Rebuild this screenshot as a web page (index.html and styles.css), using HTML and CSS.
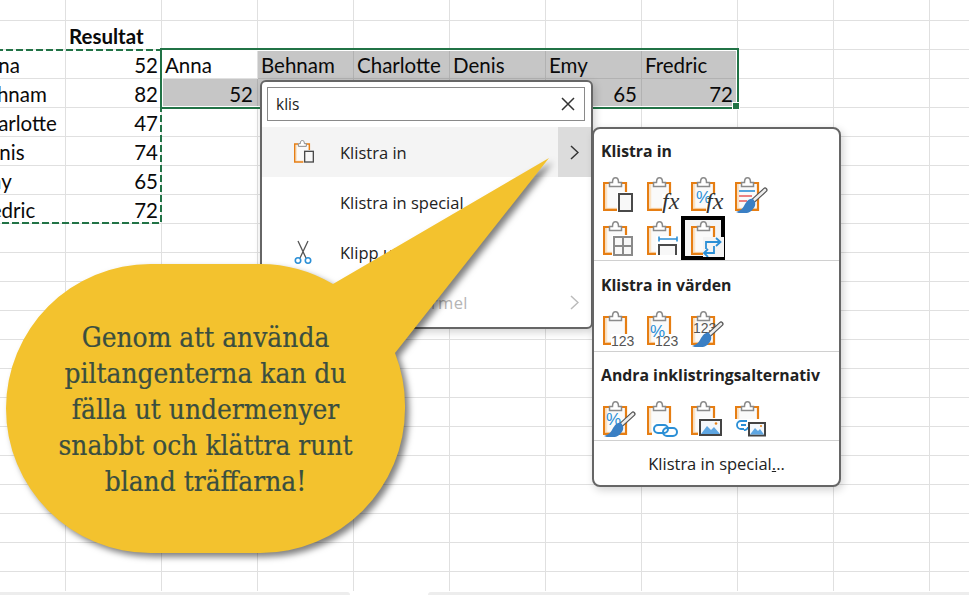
FILE: index.html
```html
<!DOCTYPE html>
<html lang="sv">
<head>
  <meta charset="UTF-8">
  <meta name="viewport" content="width=device-width, initial-scale=1.0">
  <title>Klistra in</title>
  <link rel="stylesheet" href="styles.css">
</head>

<body>
  <!-- shared icon parts -->
  <svg class="defs" width="0" height="0">
    <defs>
      <symbol id="board" viewBox="0 0 33 36">
        <path d="M2 7H23V33H2Z" fill="#fafafa"/>
        <path d="M3 31.500H23" stroke="#fbe3c4" stroke-width="1.500"/>
        <path d="M3.500 7V31" stroke="#fbe3c4" stroke-width="1.500"/>
        <path d="M6 6H1.100V32.900H23V6H18" fill="none" stroke="#e67e13" stroke-width="2.200"/>
        <path d="M6.500 9.500V5.500H9.500C9.500 2 10.500 .8 12.500 .8S15.500 2 15.500 5.500H18.500V9.500Z" fill="#fff" stroke="#8a8a8a" stroke-width="1.500"/>
      </symbol>
      <symbol id="brush" viewBox="0 0 33 36">
        <path d="M30 13L18 24" stroke="#555" stroke-width="5" stroke-linecap="round"/>
        <path d="M30 13L19 23" stroke="#eeeeee" stroke-width="2.600" stroke-linecap="round"/>
        <path d="M18 22C13 21 11 26 9 29C7.500 32 5 34 1 35C6 37.500 15 37 18 32C21 29 21 25 18 22Z" fill="#3a7fc4"/>
      </symbol>
      <symbol id="chain" viewBox="0 0 33 36">
        <rect x="7" y="24" width="14" height="8" rx="4" fill="none" stroke="#2b8fd6" stroke-width="2"/>
        <rect x="16" y="27" width="14" height="8" rx="4" fill="none" stroke="#2b8fd6" stroke-width="2"/>
      </symbol>
    </defs>
  </svg>

  <div class="sheet">
    <div class="row">
      <div class="cell"></div>
      <div class="cell bold">Resultat</div>
    </div>
    <div class="row">
      <div class="cell">Anna</div>
      <div class="cell num">52</div>
      <div class="cell">Anna</div>
      <div class="cell sel">Behnam</div>
      <div class="cell sel">Charlotte</div>
      <div class="cell sel">Denis</div>
      <div class="cell sel">Emy</div>
      <div class="cell sel">Fredric</div>
    </div>
    <div class="row">
      <div class="cell">Behnam</div>
      <div class="cell num">82</div>
      <div class="cell sel num">52</div>
      <div class="cell sel num">82</div>
      <div class="cell sel num">47</div>
      <div class="cell sel num">74</div>
      <div class="cell sel num">65</div>
      <div class="cell sel num">72</div>
    </div>
    <div class="row">
      <div class="cell">Charlotte</div>
      <div class="cell num">47</div>
    </div>
    <div class="row">
      <div class="cell">Denis</div>
      <div class="cell num">74</div>
    </div>
    <div class="row">
      <div class="cell">Emy</div>
      <div class="cell num">65</div>
    </div>
    <div class="row">
      <div class="cell">Fredric</div>
      <div class="cell num">72</div>
    </div>
  </div>
  <div class="bottom_bar"><span class="bar_left"></span><span class="bar_right"></span></div>

  <div class="selection"><span class="handle"></span></div>
  <svg class="ants" width="170" height="180">
    <path d="M-4 1H161V174H-4" fill="none" stroke="#217346" stroke-width="2" stroke-dasharray="7 3"/>
  </svg>

  <div class="menu">
    <div class="search">
      <span>klis</span>
      <svg width="14" height="14" viewBox="0 0 14 14"><path d="M1 1L13 13M13 1L1 13" stroke="#333" stroke-width="1.500"/></svg>
    </div>
    <div class="item hover">
      <span class="item_icon">
        <svg width="22" height="24" viewBox="0 0 33 36">
          <use href="#board" width="33" height="36"/>
          <rect x="14" y="15" width="19" height="21" fill="#f4f4f4"/>
          <rect x="16" y="17" width="13" height="16" fill="#f8f8f8" stroke="#4a4a4a" stroke-width="2"/>
        </svg>
      </span>
      <span class="item_text">Klistra in</span>
      <span class="arrow">
        <svg width="9" height="15" viewBox="0 0 9 15"><path d="M1 1L8 7.500L1 14" fill="none" stroke="#333" stroke-width="1.500"/></svg>
      </span>
    </div>
    <div class="item">
      <span class="item_icon"></span>
      <span class="item_text">Klistra in special</span>
    </div>
    <div class="item">
      <span class="item_icon">
        <svg width="18" height="24" viewBox="0 0 18 24">
          <path d="M4 1L12 18M14 1L6 18" stroke="#555" stroke-width="1.300" fill="none"/>
          <circle cx="4" cy="20.500" r="2.700" fill="#fff" stroke="#2b8fd6" stroke-width="1.600"/>
          <circle cx="14" cy="20.500" r="2.700" fill="#fff" stroke="#2b8fd6" stroke-width="1.600"/>
        </svg>
      </span>
      <span class="item_text">Klipp ut</span>
    </div>
    <div class="item disabled">
      <span class="item_icon"></span>
      <span class="item_text">Klistra in formel</span>
      <span class="arrow">
        <svg width="9" height="15" viewBox="0 0 9 15"><path d="M1 1L8 7.500L1 14" fill="none" stroke="#bbb" stroke-width="1.500"/></svg>
      </span>
    </div>
  </div>

  <div class="submenu">
    <div class="sub_head first">Klistra in</div>
    <div class="icons">
      <span class="tool"><svg width="33" height="36" viewBox="0 0 33 36"><use href="#board" width="33" height="36"/><rect x="14" y="15" width="19" height="21" fill="#fff"/><rect x="16" y="17" width="13" height="17" fill="#f8f8f8" stroke="#4a4a4a" stroke-width="2"/></svg></span>
      <span class="tool"><svg width="33" height="36" viewBox="0 0 33 36"><use href="#board" width="33" height="36"/><rect x="15" y="17" width="18" height="19" fill="#fff"/><text x="15" y="32" class="fx">fx</text></svg></span>
      <span class="tool"><svg width="33" height="36" viewBox="0 0 33 36"><use href="#board" width="33" height="36"/><rect x="15" y="17" width="18" height="19" fill="#fff"/><text x="5" y="26" class="pct">%</text><text x="15" y="32" class="fx">fx</text></svg></span>
      <span class="tool"><svg width="33" height="36" viewBox="0 0 33 36"><use href="#board" width="33" height="36"/><path d="M4 14H20" stroke="#2b8fd6" stroke-width="1.600"/><path d="M4 19H17M4 24H12" stroke="#e85a5a" stroke-width="1.600"/><use href="#brush" width="33" height="36"/></svg></span>
      <span class="tool"><svg width="33" height="36" viewBox="0 0 33 36"><use href="#board" width="33" height="36"/><rect x="9" y="14" width="24" height="22" fill="#fff"/><path d="M11 16H29V34H11ZM20 16V34M11 25H29" fill="#f8f8f8" stroke="#8a8a8a" stroke-width="2"/></svg></span>
      <span class="tool"><svg width="33" height="36" viewBox="0 0 33 36"><use href="#board" width="33" height="36"/><rect x="9" y="15" width="24" height="21" fill="#fff"/><path d="M12 18H30M12 15.500V20.500M30 15.500V20.500" stroke="#2b8fd6" stroke-width="1.600" fill="none"/><path d="M12 34V24H29V34" fill="#f8f8f8" stroke="#4a4a4a" stroke-width="2"/></svg></span>
      <span class="tool picked"><svg width="33" height="36" viewBox="0 0 33 36"><use href="#board" width="33" height="36"/><rect x="12" y="16" width="21" height="20" fill="#f4f4f4"/><path d="M15 28V21H29M25 17L29.500 21L25 25M23 25V32H13M17 28L13 32L17 36" fill="none" stroke="#2b8fd6" stroke-width="1.800"/></svg></span>
    </div>
    <div class="sub_head">Klistra in värden</div>
    <div class="icons values">
      <span class="tool"><svg width="33" height="36" viewBox="0 0 33 36"><use href="#board" width="33" height="36"/><rect x="8" y="23" width="25" height="13" fill="#fff"/><text x="8" y="35" class="digits">123</text></svg></span>
      <span class="tool"><svg width="33" height="36" viewBox="0 0 33 36"><use href="#board" width="33" height="36"/><rect x="8" y="23" width="25" height="13" fill="#fff"/><text x="3" y="26" class="pct">%</text><text x="8" y="35" class="digits">123</text></svg></span>
      <span class="tool"><svg width="33" height="36" viewBox="0 0 33 36"><use href="#board" width="33" height="36"/><text x="2" y="22" class="digits">123</text><use href="#brush" width="33" height="36"/></svg></span>
    </div>
    <div class="sub_head">Andra inklistringsalternativ</div>
    <div class="icons">
      <span class="tool"><svg width="33" height="36" viewBox="0 0 33 36"><use href="#board" width="33" height="36"/><text x="3" y="24" class="pct">%</text><use href="#brush" width="33" height="36"/></svg></span>
      <span class="tool"><svg width="33" height="36" viewBox="0 0 33 36"><use href="#board" width="33" height="36"/><rect x="5" y="22" width="28" height="14" fill="#fff"/><use href="#chain" width="33" height="36"/></svg></span>
      <span class="tool"><svg width="33" height="36" viewBox="0 0 33 36"><use href="#board" width="33" height="36"/><rect x="7" y="17" width="26" height="19" fill="#fff"/><rect x="9" y="19" width="21" height="15" fill="#f4f8fc" stroke="#444" stroke-width="2"/><path d="M10 33L16 25L20 29L23 26L29 33Z" fill="#5ea6e2"/><circle cx="25" cy="22.500" r="1.300" fill="#e8831a"/></svg></span>
      <span class="tool"><svg width="33" height="36" viewBox="0 0 33 36"><use href="#board" width="33" height="36"/><rect x="0" y="18" width="33" height="18" fill="#fff"/><path d="M12 20H6A4 4 0 0 0 6 28H9M6 24H11" fill="none" stroke="#2b8fd6" stroke-width="1.800"/><path d="M9 29A3.500 3.500 0 0 0 13 26" fill="none" stroke="#2b8fd6" stroke-width="1.800"/><rect x="14" y="22" width="16" height="12.500" fill="#f4f8fc" stroke="#444" stroke-width="2"/><path d="M15 33.500L20 27L23 30L25 28L29 33.500Z" fill="#5ea6e2"/><circle cx="26" cy="25" r="1" fill="#e8831a"/></svg></span>
    </div>
    <div class="sub_foot">Klistra in special<u>.</u>..</div>
  </div>

  <div class="callout">
    <svg class="bubble" width="560" height="400" viewBox="0 158 560 400">
      <path d="M150.500 264H260.500A144.500 144.500 0 0 1 333 284L549 158L395 353A144.500 144.500 0 0 1 405 408.500A144.500 144.500 0 0 1 260.500 553H150.500A144.500 144.500 0 0 1 150.500 264Z" fill="#f3c22e"/>
    </svg>
    <p class="callout_text">Genom att använda<br>piltangenterna kan du<br>fälla ut undermenyer<br>snabbt och klättra runt<br>bland träffarna!</p>
  </div>
</body>

</html>
```
FILE: styles.css
```css
* {
  box-sizing: border-box;
}

html, body {
  height: 100%;
}

body {
  margin: 0;
  overflow: hidden;
  background-color: #ffffff;
  position: relative;
}

.defs {
  position: absolute;
}

/* sheet */
.sheet {
  margin-left: -30px;
  width: 1100px;
  height: 591px;
  padding-top: 21px;
  font-family: 'Lato', sans-serif;
  font-size: 20.500px;
  color: #0a0a0a;
  background-image:
    linear-gradient(to right, transparent 95px, #e0e0e0 95px),
    linear-gradient(to bottom, transparent 28px, #e0e0e0 28px);
  background-size: 96px 100%, 100% 29px;
  background-position: 0 0, 0 21px;
}

.row {
  display: grid;
  grid-template-columns: repeat(8, 96px);
  height: 29px;
}

.cell {
  padding: 0 4px 0 3px;
  line-height: 31px;
  white-space: nowrap;
  overflow: hidden;
}

.bold {
  font-weight: bold;
}

.num {
  text-align: right;
}

.sel {
  background-color: #c6c6c6;
  border-right: 1px solid #b2b2b2;
  border-bottom: 1px solid #b2b2b2;
}

.bottom_bar {
  display: flex;
  justify-content: space-between;
  height: 4px;
  padding-top: 1px;
}

.bar_left,
.bar_right {
  background-color: #ededed;
  border-radius: 0 6px 0 0;
}

.bar_left {
  width: 350px;
}

.bar_right {
  width: 541px;
  border-radius: 6px 0 0 0;
}

/* selected range and copy ants */
.selection {
  position: absolute;
  left: 160px;
  top: 48px;
  width: 579px;
  height: 61px;
  border: 2px solid #217346;
  box-shadow: inset 0 0 0 1px #ffffff;
}

.handle {
  position: absolute;
  right: -3px;
  bottom: -3px;
  width: 8px;
  height: 8px;
  background-color: #217346;
  border: 1px solid #ffffff;
}

.ants {
  position: absolute;
  left: 0;
  top: 49px;
}

/* search menu */
.menu {
  position: absolute;
  left: 260px;
  top: 80px;
  width: 333px;
  padding-top: 5px;
  border: 2px solid #666666;
  border-radius: 6px;
  background-color: #ffffff;
  box-shadow: 2px 3px 8px rgba(0, 0, 0, 0.18);
  font-family: 'Open Sans', sans-serif;
  font-size: 16.500px;
  color: #222222;
}

.search {
  display: flex;
  align-items: center;
  justify-content: space-between;
  height: 34px;
  margin: 0 6px 6px 5px;
  padding: 0 9px 0 8px;
  border: 1px solid #8a8a8a;
  font-size: 15.500px;
}

.item {
  display: flex;
  align-items: center;
  height: 50px;
}

.hover {
  background-color: #f4f4f4;
}

.item_icon {
  display: flex;
  width: 78px;
  padding-left: 32px;
}

.item_text {
  flex: 1;
}

.arrow {
  display: flex;
  align-items: center;
  justify-content: center;
  width: 33px;
  height: 100%;
}

.hover .arrow {
  background-color: #dcdcdc;
}

.disabled {
  color: #b5b5b5;
  letter-spacing: 0.350px;
}

/* paste submenu */
.submenu {
  position: absolute;
  left: 592px;
  top: 127px;
  width: 249px;
  height: 360px;
  border: 2px solid #666666;
  border-radius: 8px;
  background-color: #ffffff;
  box-shadow: 2px 3px 8px rgba(0, 0, 0, 0.18);
  font-family: 'Open Sans', sans-serif;
  font-size: 16.500px;
  color: #222222;
}

.sub_head {
  display: flex;
  align-items: center;
  height: 46px;
  padding: 2px 0 0 7px;
  border-top: 1px solid #d0d0d0;
  font-size: 15.800px;
  font-weight: bold;
}

.sub_head.first {
  height: 43px;
  padding-top: 0;
  border-top: 0;
}

.icons {
  display: grid;
  grid-template-columns: repeat(4, 44px);
  margin-left: -1px;
}

.values {
  padding-bottom: 1px;
}

.values + .sub_head {
  height: 45px;
}

.tool {
  display: block;
  width: 44px;
  height: 44px;
  padding: 5px 0 0 10px;
}

.tool svg {
  display: block;
}

.picked {
  padding: 1px 0 0 6px;
  border: 4px solid #000000;
  background-color: #f4f4f4;
}

.fx {
  font-family: 'Liberation Serif', serif;
  font-style: italic;
  font-size: 24px;
  fill: #333333;
}

.pct {
  font-family: 'Liberation Sans', sans-serif;
  font-size: 17px;
  fill: #2b8fd6;
}

.digits {
  font-family: 'Liberation Sans', sans-serif;
  font-size: 14px;
  fill: #555555;
}

.sub_foot {
  display: flex;
  align-items: center;
  justify-content: center;
  height: 45px;
  border-top: 1px solid #d0d0d0;
}

/* speech bubble */
.callout {
  position: absolute;
  left: 6px;
  top: 264px;
  display: flex;
  align-items: center;
  justify-content: center;
  width: 399px;
  height: 289px;
}

.bubble {
  position: absolute;
  left: -6px;
  top: -106px;
  filter: drop-shadow(4px 4px 3px rgba(0, 0, 0, 0.5));
}

.callout_text {
  position: relative;
  margin: 0;
  padding-top: 2px;
  font-family: 'DejaVu Serif Condensed', 'DejaVu Serif', serif;
  font-size: 27.800px;
  line-height: 36px;
  text-align: center;
  color: #3a4e40;
  -webkit-text-stroke: 0.2px #3a4e40;
}
```
